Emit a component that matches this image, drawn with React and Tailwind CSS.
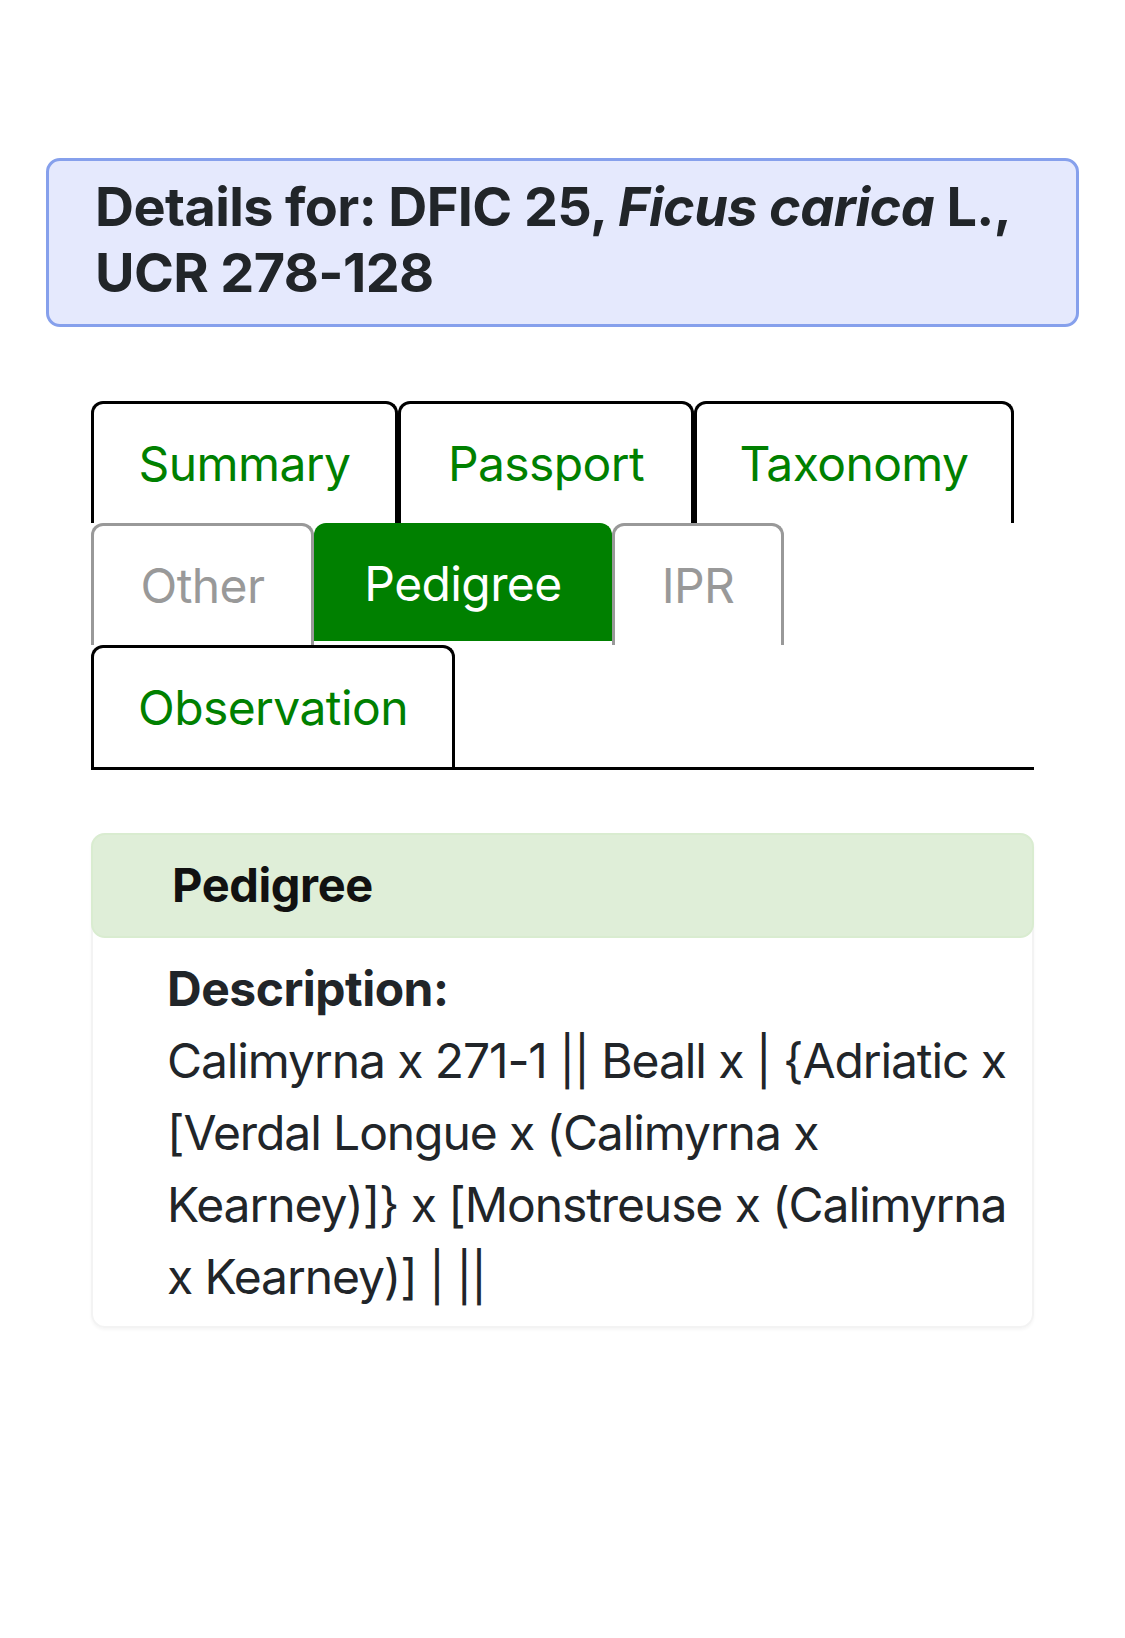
export default function App() {
  const tabs = [
    { label: "Summary", w: "w-[307px]", kind: "link" },
    { label: "Passport", w: "w-[296px]", kind: "link" },
    { label: "Taxonomy", w: "w-[320px]", kind: "link" },
    { label: "Other", w: "w-[223px]", kind: "disabled" },
    { label: "Pedigree", w: "w-[298px]", kind: "active" },
    { label: "IPR", w: "w-[172px]", kind: "disabled" },
    { label: "Observation", w: "w-[364px]", kind: "link" },
  ]

  const lines = [
    "Calimyrna x 271-1 || Beall x | {Adriatic x",
    "[Verdal Longue x (Calimyrna x",
    "Kearney)]} x [Monstreuse x (Calimyrna",
    "x Kearney)] | ||",
  ]

  return (
    <div className="min-h-[1638px] bg-white pt-[158px] px-[46px] font-['Inter',sans-serif] text-[#212529]">
      <div className="rounded-[14px] border-[3px] border-[#86a0ec] bg-[#e5e9fd] pl-[46px] pr-[40px] pt-[13px] pb-[18px]">
        <h1 className="text-[54px] font-bold leading-[66px] tracking-[-0.6px]">
          Details for: DFIC 25, <i>Ficus carica</i> L., UCR 278-128
        </h1>
      </div>

      <div className="mx-[45px] mt-[74px]">
        <div className="flex flex-wrap border-b-[3px] border-black">
          {tabs.map((t) => (
            <div
              key={t.label}
              className={
                t.w +
                " flex items-center justify-center rounded-t-[12px] border-[3px] border-b-0 text-[48px] leading-[72px] tracking-[-0.6px] " +
                (t.kind === "active"
                  ? "h-[118px] self-start border-[#008000] bg-[#008000] text-white"
                  : t.kind === "disabled"
                  ? "h-[122px] border-[#999999] text-[#999999]"
                  : "h-[122px] border-black text-[#008000]")
              }
            >
              {t.label}
            </div>
          ))}
        </div>

        <div className="mt-[63px] rounded-[14px] border-[2px] border-[#f3f3f3] shadow-[0_2px_3px_rgba(0,0,0,0.04)]">
          <div className="-m-[2px] flex h-[105px] items-center rounded-[14px] border-[2px] border-[#d9ecd0] bg-[#dfeed8] pl-[79px]">
            <h2 className="text-[47px] font-bold tracking-[-0.4px] text-[#111111]">Pedigree</h2>
          </div>
          <div className="pl-[74px] pr-[10px] pt-[17px] pb-[13px]">
            <div className="text-[48px] font-bold leading-[72px] tracking-[-0.5px]">Description:</div>
            <div className="text-[48px] leading-[72px] tracking-[-1.1px]">
              {lines.map((l) => (
                <div key={l} className="whitespace-nowrap">
                  {l}
                </div>
              ))}
            </div>
          </div>
        </div>
      </div>
    </div>
  )
}
